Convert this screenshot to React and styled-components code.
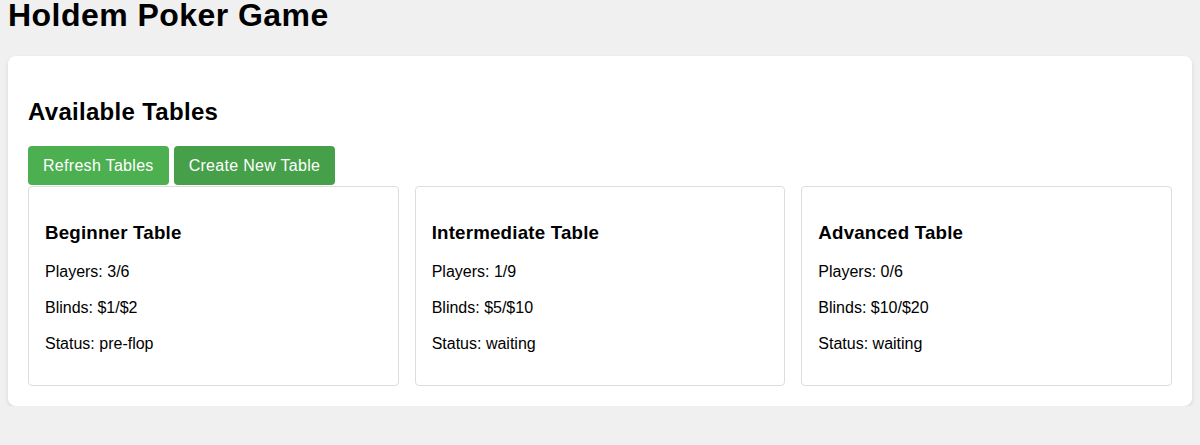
import React from 'react';
import styled, { createGlobalStyle } from 'styled-components';

const GlobalStyle = createGlobalStyle`
  body {
    margin: 0;
    padding: 0 8px;
    background-color: #f0f0f0;
    font-family: "Liberation Sans", Arial, sans-serif;
    color: #000;
  }
`;

const Title = styled.h1`
  font-size: 32px;
  font-weight: bold;
  letter-spacing: 0.45px;
  margin: -3px 0 22px;
  line-height: 37px;
`;

const Panel = styled.div`
  background: #fff;
  border-radius: 8px;
  padding: 20px;
  box-shadow: 0 2px 4px rgba(0, 0, 0, 0.1);
`;

const Heading = styled.h2`
  font-size: 24px;
  font-weight: bold;
  letter-spacing: 0.3px;
  margin: 22px 0 20px;
  line-height: 28px;
`;

const Toolbar = styled.div`
  display: flex;
  gap: 5px;
  margin-bottom: 1px;
`;

const Button = styled.button`
  font-family: inherit;
  font-size: 16px;
  line-height: 19px;
  letter-spacing: 0.3px;
  color: #fff;
  background-color: ${(props) => (props.$dark ? '#45a049' : '#4caf50')};
  border: none;
  border-radius: 4px;
  padding: 10px 15px;
  cursor: pointer;
`;

const Grid = styled.div`
  display: grid;
  grid-template-columns: repeat(3, 1fr);
  gap: 16px;
`;

const Card = styled.div`
  border: 1px solid #ddd;
  border-radius: 4px;
  padding: 16px;
  h3 {
    font-size: 18.72px;
    font-weight: bold;
    letter-spacing: 0.2px;
    margin: 18.72px 0;
    line-height: 22px;
  }
  p {
    font-size: 16px;
    line-height: 20px;
    margin: 16px 0;
  }
  p:last-child {
    margin-bottom: 15px;
  }
`;

const tables = [
  { name: 'Beginner Table', players: '3/6', blinds: '$1/$2', status: 'pre-flop' },
  { name: 'Intermediate Table', players: '1/9', blinds: '$5/$10', status: 'waiting' },
  { name: 'Advanced Table', players: '0/6', blinds: '$10/$20', status: 'waiting' },
];

export default function App() {
  return (
    <>
      <GlobalStyle />
      <Title>Holdem Poker Game</Title>
      <Panel>
        <Heading>Available Tables</Heading>
        <Toolbar>
          <Button>Refresh Tables</Button>
          <Button $dark>Create New Table</Button>
        </Toolbar>
        <Grid>
          {tables.map((t) => (
            <Card key={t.name}>
              <h3>{t.name}</h3>
              <p>Players: {t.players}</p>
              <p>Blinds: {t.blinds}</p>
              <p>Status: {t.status}</p>
            </Card>
          ))}
        </Grid>
      </Panel>
    </>
  );
}
